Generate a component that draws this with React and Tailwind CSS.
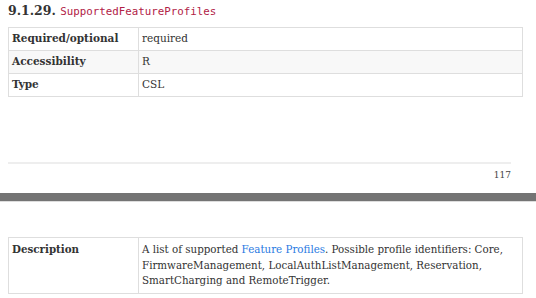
const SERIF = { fontFamily: '"DejaVu Serif", "Liberation Serif", serif' };

const rows = [
  { label: 'Required/optional', value: 'required' },
  { label: 'Accessibility', value: 'R' },
  { label: 'Type', value: 'CSL' },
];

function App() {
  return (
    <div className="w-[536px] h-[298px] overflow-hidden bg-white text-[#333]" style={SERIF}>
      <h3 className="pl-2 pt-[2px] h-[27px] text-[12.5px] leading-[18px] font-bold text-[#333]">
        9.1.29.{' '}
        <span className="font-normal text-[#b12146] font-['DejaVu_Sans_Mono',monospace] text-[10.8px]">
          SupportedFeatureProfiles
        </span>
      </h3>

      <table className="ml-2 w-[515px] border-collapse border border-[#ebebeb] text-[10.5px]">
        <tbody>
          {rows.map((r, i) => (
            <tr key={r.label} className={i === 1 ? 'bg-[#f8f8f8] h-[23px]' : 'h-[23px]'}>
              <td className="w-[130px] border border-[#dedede] pl-[3px] font-bold align-middle">{r.label}</td>
              <td className="border border-[#dedede] pl-[3px] align-middle">{r.value}</td>
            </tr>
          ))}
        </tbody>
      </table>

      <div className="ml-2 mt-[65px] w-[503px] h-[2px] bg-[#eeeeee]" />
      <div className="ml-2 w-[503px] h-[29px] pt-[5px] text-right text-[9px] text-[#444]">117</div>

      <div className="h-[9px] bg-[#747474] border-b border-[#ddd]" />

      <table className="ml-2 mt-[35px] w-[515px] border-collapse border border-[#ebebeb] text-[10.3px]">
        <tbody>
          <tr>
            <td className="w-[130px] border border-[#dedede] pl-[3px] pt-[4px] pb-[4px] font-bold align-top leading-[15.5px]">
              Description
            </td>
            <td className="border border-[#dedede] pl-[3px] pr-2 pt-[4px] pb-[4px] align-top leading-[15.5px] whitespace-nowrap">
              A list of supported <span className="text-[#2a7ae2]">Feature Profiles</span>. Possible profile identifiers: Core,
              <br />
              FirmwareManagement, LocalAuthListManagement, Reservation,
              <br />
              SmartCharging and RemoteTrigger.
            </td>
          </tr>
        </tbody>
      </table>
    </div>
  );
}

export default App;
